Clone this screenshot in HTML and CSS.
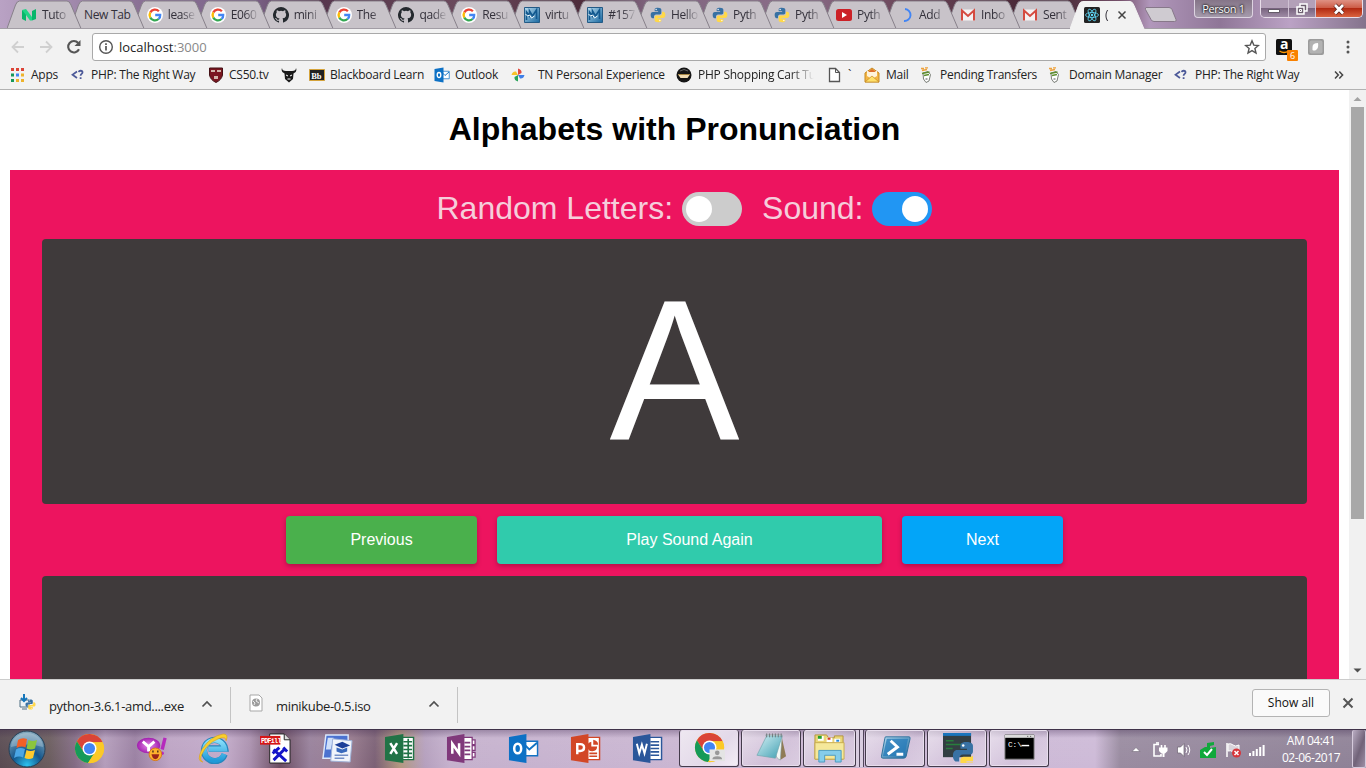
FILE: index.html
```html
<!DOCTYPE html>
<html lang="en">
<head>
<meta charset="utf-8">
<title>Alphabets with Pronunciation</title>
<link rel="stylesheet" href="styles.css">
</head>
<body>
<svg class="defs" width="0" height="0">
  <defs>
    <linearGradient id="gBlue" x1="0" y1="0" x2="1" y2="1"><stop offset="0" stop-color="#b8ddf0"/><stop offset="1" stop-color="#17669f"/></linearGradient>
    <radialGradient id="gOrb" cx=".5" cy=".95" r=".9"><stop offset="0" stop-color="#2cc3f0"/><stop offset=".45" stop-color="#14568c"/><stop offset="1" stop-color="#7fa5bb"/></radialGradient>
    <linearGradient id="gIe" x1="0" y1="0" x2="0" y2="1"><stop offset="0" stop-color="#8be0fb"/><stop offset="1" stop-color="#1f9ad8"/></linearGradient>
    <linearGradient id="gPad" x1="0" y1="0" x2="1" y2="1"><stop offset="0" stop-color="#d4f0f4"/><stop offset="1" stop-color="#3f9fb2"/></linearGradient>
    <radialGradient id="gYahoo"><stop offset="0" stop-color="#e58be8"/><stop offset="1" stop-color="#a21faf"/></radialGradient>
  </defs>
  <symbol id="tabshape" viewBox="0 0 75 28"><path d="M0 28.500L8.500 5Q10 1 12.500 1H60Q62.500 1 64 5L74 28.500Z"/></symbol>
  <symbol id="google" viewBox="0 0 16 16"><circle cx="8" cy="8" r="8" fill="#fff"/><g fill="none" stroke-width="2.300"><path d="M11.900 4.200A5.400 5.400 0 0 0 3.300 5.400" stroke="#ea4335"/><path d="M3.300 5.400A5.400 5.400 0 0 0 3.300 10.600" stroke="#fbbc05"/><path d="M3.300 10.600A5.400 5.400 0 0 0 11.600 12" stroke="#34a853"/><path d="M11.600 12A5 5 0 0 0 13.200 8H8.200" stroke="#4285f4"/></g></symbol>
  <symbol id="github" viewBox="0 0 16 16"><path fill="#24292e" d="M8 0a8 8 0 0 0-2.530 15.590c.4.070.55-.17.55-.38v-1.490C4 14.090 3.480 13.230 3.320 12.780c-.09-.23-.48-.94-.82-1.130-.28-.15-.68-.52-.01-.53.63-.01 1.080.58 1.230.82.72 1.210 1.870.87 2.330.66.070-.52.28-.87.510-1.070-1.780-.2-3.640-.89-3.640-3.950 0-.87.310-1.590.82-2.150-.08-.2-.36-1.020.08-2.120 0 0 .67-.21 2.200.82a7.400 7.400 0 0 1 4 0c1.530-1.040 2.200-.82 2.200-.82.440 1.100.160 1.920.080 2.120.510.560.820 1.270.820 2.150 0 3.070-1.870 3.750-3.650 3.950.290.250.540.730.540 1.480v2.200c0 .210.150.460.550.380A8 8 0 0 0 8 0z"/></symbol>
  <symbol id="python" viewBox="0 0 24 24"><path fill="#3871a3" d="M11.800 1C7 1 7 3.100 7 4v2.500h5.200v1H4.500C2 7.500 1 9.500 1 12s1 4.700 3 4.700h2v-2.600c0-1.500 1.300-3 3-3h5.500c1.400 0 2.500-1.100 2.500-2.500V4c0-1.700-1.600-3-5.200-3z"/><circle cx="9.200" cy="3.800" r="1" fill="#fff"/><path fill="#ffd849" d="M12.200 23c4.800 0 4.800-2.100 4.800-3v-2.500h-5.200v-1h7.700c2.500 0 3.500-2 3.500-4.500s-1-4.700-3-4.700h-2v2.600c0 1.500-1.300 3-3 3H9.500C8.100 12.900 7 14 7 15.400V20c0 1.700 1.600 3 5.200 3z"/><circle cx="14.800" cy="20.200" r="1" fill="#fff"/></symbol>
  <symbol id="vm" viewBox="0 0 16 16"><path fill="url(#gBlue)" stroke="#245b86" d="M.5.5h15v15H.5z"/><path d="M2.500 13V5l3 4V4l3 5 4-6v9" fill="none" stroke="#13598f" stroke-width="1.600"/><path d="M1.500 7l2 2 2-1 2 3 3-2" stroke="#f4fbff" fill="none"/></symbol>
  <symbol id="gmail" viewBox="0 0 16 16"><path fill="#f5f2f2" d="M1 2.500h14v11H1z"/><path fill="none" stroke="#d54b40" stroke-width="2" d="M2 13.500V3.600L8 9l6-5.400v9.900"/></symbol>
  <symbol id="php" viewBox="0 0 16 16"><path d="M7 4.500L2.500 7.800 7 11" fill="none" stroke="#4d5a99" stroke-width="1.700"/><path d="M8.800 5.200c.3-2 3.700-1.900 3.700.2 0 1.500-1.900 1.600-1.900 3.300M10.600 10.200v1.700" fill="none" stroke="#4d5a99" stroke-width="1.800"/></symbol>
  <symbol id="sheetfox" viewBox="0 0 16 16"><path d="M2 1.500h3M6 .8h3M3 3.500l5-1" stroke="#eda13b" stroke-width="1.300" fill="none"/><path d="M4 6l5-1.500 2.500 3L10 14l-3 1.500L4.500 12z" fill="#fff" stroke="#6d726a" stroke-width=".9"/><path d="M3 6.500l7.500-1.500M5 8.500l5-1" stroke="#5f8f30" stroke-width="1.500"/><path d="M6.500 12h2" stroke="#555"/></symbol>
  <symbol id="outlook" viewBox="0 0 32 32"><path fill="#fff" stroke="#1273c4" stroke-width="1.500" d="M16 8.500h14.500v15H16z"/><path d="M17 12l5 5 8-7" fill="none" stroke="#1273c4" stroke-width="2"/><path fill="#0d71c5" d="M1 4l18-3v30L1 28z"/><ellipse cx="10" cy="16" rx="3.600" ry="5" fill="none" stroke="#fff" stroke-width="2.600"/></symbol>
  <symbol id="chrome" viewBox="0 0 32 32"><circle cx="16" cy="16" r="15" fill="#fbc927"/><path d="M3 8.500A15 15 0 0 1 29.500 9.500H16L10 19.500z" fill="#da4437"/><path d="M3 8.500A15 15 0 0 0 14.500 31L21.500 20 10 19.500z" fill="#159a59"/><path d="M29.500 9.500H16v5l5.500 5.500-7 11A15 15 0 0 0 29.500 9.500z" fill="#fbc927"/><circle cx="16" cy="16" r="7.200" fill="#fff"/><circle cx="16" cy="16" r="5.700" fill="#4285f4"/></symbol>
  <symbol id="chev" viewBox="0 0 12 12"><path d="M1.500 8.500L6 4l4.500 4.500" fill="none" stroke="#505050" stroke-width="1.700"/></symbol>
</svg>

<header class="frame">
  <nav class="tabs">
    <div class="tab"><svg class="shape"><use href="#tabshape"/></svg><svg class="fav" viewBox="0 0 16 16"><path d="M1 3l4 2v9l-4-2zM15 2v10l-4 1.500V4z" fill="#08b66b"/><path d="M1 3l4-1 6 8v3.500H9L5 8z" fill="#20d486"/></svg><span class="label">Tuto</span></div>
    <div class="tab plain"><svg class="shape"><use href="#tabshape"/></svg><span class="label">New Tab</span></div>
    <div class="tab"><svg class="shape"><use href="#tabshape"/></svg><svg class="fav"><use href="#google"/></svg><span class="label">lease</span></div>
    <div class="tab"><svg class="shape"><use href="#tabshape"/></svg><svg class="fav"><use href="#google"/></svg><span class="label">E060</span></div>
    <div class="tab"><svg class="shape"><use href="#tabshape"/></svg><svg class="fav"><use href="#github"/></svg><span class="label">mini</span></div>
    <div class="tab"><svg class="shape"><use href="#tabshape"/></svg><svg class="fav"><use href="#google"/></svg><span class="label">The</span></div>
    <div class="tab"><svg class="shape"><use href="#tabshape"/></svg><svg class="fav"><use href="#github"/></svg><span class="label">qade</span></div>
    <div class="tab"><svg class="shape"><use href="#tabshape"/></svg><svg class="fav"><use href="#google"/></svg><span class="label">Resu</span></div>
    <div class="tab"><svg class="shape"><use href="#tabshape"/></svg><svg class="fav"><use href="#vm"/></svg><span class="label">virtu</span></div>
    <div class="tab"><svg class="shape"><use href="#tabshape"/></svg><svg class="fav"><use href="#vm"/></svg><span class="label">#157</span></div>
    <div class="tab"><svg class="shape"><use href="#tabshape"/></svg><svg class="fav"><use href="#python"/></svg><span class="label">Hello</span></div>
    <div class="tab"><svg class="shape"><use href="#tabshape"/></svg><svg class="fav"><use href="#python"/></svg><span class="label">Pyth</span></div>
    <div class="tab"><svg class="shape"><use href="#tabshape"/></svg><svg class="fav"><use href="#python"/></svg><span class="label">Pyth</span></div>
    <div class="tab"><svg class="shape"><use href="#tabshape"/></svg><svg class="fav" viewBox="0 0 16 16"><rect y="2" width="16" height="12" rx="2.500" fill="#cc2127"/><path d="M6 5l5 3-5 3z" fill="#fff"/></svg><span class="label">Pyth</span></div>
    <div class="tab"><svg class="shape"><use href="#tabshape"/></svg><svg class="fav" viewBox="0 0 16 16"><path d="M7 2a6 6 0 1 1-1 12" fill="none" stroke="#4285f4" stroke-width="1.900"/></svg><span class="label">Add</span></div>
    <div class="tab"><svg class="shape"><use href="#tabshape"/></svg><svg class="fav"><use href="#gmail"/></svg><span class="label">Inbo</span></div>
    <div class="tab"><svg class="shape"><use href="#tabshape"/></svg><svg class="fav"><use href="#gmail"/></svg><span class="label">Sent</span></div>
    <div class="tab active"><svg class="shape"><use href="#tabshape"/></svg><svg class="fav" viewBox="0 0 16 16"><rect width="16" height="16" rx="1.500" fill="#222"/><g fill="none" stroke="#61dafb" stroke-width=".8"><ellipse cx="8" cy="8" rx="6.500" ry="2.500"/><ellipse cx="8" cy="8" rx="6.500" ry="2.500" transform="rotate(60 8 8)"/><ellipse cx="8" cy="8" rx="6.500" ry="2.500" transform="rotate(120 8 8)"/></g><circle cx="8" cy="8" r="1.200" fill="#61dafb"/></svg><span class="label">(</span><svg class="close" viewBox="0 0 10 10"><path d="M1.500 1.500l7 7M8.500 1.500l-7 7" stroke="#444" stroke-width="1.500"/></svg></div>
    <svg class="newtab" viewBox="0 0 34 18"><path d="M2 1.500h23q2 0 3 2l4 10q1 2-1.500 2H10q-2 0-3-2L1.500 3.500Q1 1.500 2 1.500z" fill="#cfcbd1" stroke="#87788a"/></svg>
  </nav>
  <div class="winctl">
    <div class="person">Person 1</div>
    <div class="buttons">
      <span class="min"><svg viewBox="0 0 14 14" width="14" height="14"><path d="M1.500 7.500h11v3h-11z" fill="#fff" stroke="#4c4350" stroke-width=".8"/></svg></span>
      <span class="max"><svg viewBox="0 0 14 14" width="14" height="14"><g fill="#6d5f70" stroke="#fff" stroke-width="1.500"><path d="M5 2h7v7H5z"/><path d="M2 5h7v7H2z"/><path d="M4.500 7.500h2v2h-2z" stroke-width="1"/></g></svg></span>
      <span class="x"><svg viewBox="0 0 14 14" width="14" height="14"><path d="M3 3l8 8.500M11 3l-8 8.500" stroke="#58211c" stroke-width="4.200"/><path d="M3 3l8 8.500M11 3l-8 8.500" stroke="#fff" stroke-width="2.700"/></svg></span>
    </div>
  </div>
</header>

<div class="toolbar">
  <svg class="nav" viewBox="0 0 16 16"><path d="M14 8H3M8 2.500L2.500 8 8 13.500" fill="none" stroke="#d0d0d0" stroke-width="1.800"/></svg>
  <svg class="nav" viewBox="0 0 16 16"><path d="M2 8h11M8 2.500L13.500 8 8 13.500" fill="none" stroke="#d0d0d0" stroke-width="1.800"/></svg>
  <svg class="nav" viewBox="0 0 16 16"><path d="M13 10.200A5.700 5.700 0 1 1 12.200 4" fill="none" stroke="#555" stroke-width="2.100"/><path d="M14.500 1v6h-6z" fill="#555"/></svg>
  <div class="omnibox">
    <svg viewBox="0 0 16 16" width="16" height="16"><circle cx="8" cy="8" r="6.300" fill="none" stroke="#555" stroke-width="1.400"/><path d="M8 7v4.500M8 4.300v1.600" stroke="#555" stroke-width="1.700"/></svg>
    <span class="url">localhost<i>:3000</i></span>
    <svg class="star" viewBox="0 0 16 16" width="16" height="16"><path d="M8 1.800l1.800 4.300 4.600.4-3.500 3 1.100 4.500L8 11.600 4 14l1.100-4.500-3.500-3 4.600-.4z" fill="none" stroke="#555" stroke-width="1.400"/></svg>
  </div>
  <div class="ext amazon"><svg viewBox="0 0 16 16" width="16" height="16"><rect width="16" height="16" rx="1.500" fill="#111"/><path d="M3.500 12q4.500 3 9 0" fill="none" stroke="#f90" stroke-width="1.300"/></svg><b>a</b><em>6</em></div>
  <svg class="ext" viewBox="0 0 16 16"><rect width="16" height="16" rx="2" fill="#9b9b9b"/><rect x="1.500" y="1.500" width="13" height="13" rx="2" fill="#b2b2b2"/><path d="M4.500 11V8q0-4 5.500-4 1 5-2 7-2 1-3.500 0z" fill="#fff"/></svg>
  <svg class="dots" viewBox="0 0 4 16"><circle cx="2" cy="3" r="1.500" fill="#555"/><circle cx="2" cy="8" r="1.500" fill="#555"/><circle cx="2" cy="13" r="1.500" fill="#555"/></svg>
</div>

<div class="bookmarks">
  <div class="bm" style="width:61px"><svg viewBox="0 0 16 16"><path d="M2 1h3v3H2zM7 1h3v3H7zM12 1h3v3h-3z" fill="#dc4437"/><path d="M2 6.500h3v3H2z" fill="#16985a"/><path d="M7 6.500h3v3H7z" fill="#4285f4"/><path d="M12 6.500h3v3h-3zM12 12h3v3h-3zM7 12h3v3H7z" fill="#eeb32b"/><path d="M2 12h3v3H2z" fill="#16985a"/></svg><span>Apps</span></div>
  <div class="bm tight" style="width:138px"><svg><use href="#php"/></svg><span>PHP: The Right Way</span></div>
  <div class="bm tight" style="width:73px"><svg viewBox="0 0 16 16"><path d="M1.500 1h13v7q-1 5-6.500 7.500Q2.500 13 1.500 8z" fill="#7a1620" stroke="#431015"/><path d="M3 3h4v2H3zM9 3h4v2H9zM6 9h4v3H6z" fill="#d1b5aa"/></svg><span>CS50.tv</span></div>
  <div class="bm" style="width:28px"><svg viewBox="0 0 16 16"><path d="M1 1q0 3 4 3h6q4 0 4-3 1.500 4-2.500 5.500L12 12l-4 3.500L4 12l-.5-5.500Q-.5 5 1 1z" fill="#191919"/><path d="M5 8l2 1M11 8L9 9M6.500 12h3" stroke="#fff"/></svg></div>
  <div class="bm tight" style="width:125px"><svg viewBox="0 0 16 16"><path fill="#222" stroke="#d5a33a" d="M.5 2.500h15v11H.5z"/><text x="2.300" y="11.500" class="bb">Bb</text></svg><span>Blackboard Learn</span></div>
  <div class="bm tight" style="width:76px"><svg><use href="#outlook"/></svg><span>Outlook</span></div>
  <div class="bm" style="width:27px"><svg viewBox="0 0 16 16"><path d="M8 8V1.500q4 1 3.500 4.500z" fill="#e14a3e"/><path d="M8 8h6.500q-1 4-4.500 3.500z" fill="#3f7fe8"/><path d="M8 8v6.500q-4-1-3.500-4.500z" fill="#28a45a"/><path d="M8 8H1.500q1-4 4.500-3.500z" fill="#f8c229"/></svg></div>
  <div class="bm" style="width:139px"><span class="first">TN Personal Experience</span></div>
  <div class="bm cart" style="width:150px"><svg viewBox="0 0 16 16"><circle cx="8" cy="8" r="7.500" fill="#161616"/><path d="M2 7.500h12L11.500 11h-7z" fill="#f2ddb2"/><path d="M2 7.500h12" stroke="#a98947"/><path d="M4 4q4-3 8 0" fill="none" stroke="#666"/></svg><span>PHP Shopping Cart Tu</span></div>
  <div class="bm" style="width:38px"><svg viewBox="0 0 16 16"><path d="M3.500 1.500h6l4 4v9h-10z" fill="#fff" stroke="#555" stroke-width="1.300"/><path d="M9.500 1.500v4h4" fill="none" stroke="#555"/></svg><span>`</span></div>
  <div class="bm" style="width:55px"><svg viewBox="0 0 16 16"><path d="M1 6l7-5 7 5v9H1z" fill="#f4b544" stroke="#c58b24"/><path d="M3 4h10v5l-5 3-5-3z" fill="#fff3da"/><path d="M4 5l4-3 4 3z" fill="#de6d2c"/><path d="M1 15l7-6 7 6z" fill="#ffe06a" stroke="#c58b24" stroke-width=".7"/></svg><span>Mail</span></div>
  <div class="bm tight" style="width:128px"><svg><use href="#sheetfox"/></svg><span>Pending Transfers</span></div>
  <div class="bm" style="width:126px"><svg><use href="#sheetfox"/></svg><span>Domain Manager</span></div>
  <div class="bm" style="width:157px"><svg><use href="#php"/></svg><span>PHP: The Right Way</span></div>
  <svg class="more" viewBox="0 0 10 10"><path d="M1 1.500L4.300 5 1 8.500M5.300 1.500L8.600 5 5.300 8.500" fill="none" stroke="#444" stroke-width="1.500"/></svg>
</div>

<div class="viewport">
  <main class="page">
    <h1>Alphabets with Pronunciation</h1>
    <section class="app">
      <div class="options"><span>Random Letters:</span><i class="switch"></i><span class="snd">Sound:</span><i class="switch on"></i></div>
      <div class="card"><span class="letter">A</span></div>
      <div class="actions"><button class="btn prev">Previous</button><button class="btn play">Play Sound Again</button><button class="btn next">Next</button></div>
      <div class="card"></div>
    </section>
  </main>
  <aside class="scroll"><svg viewBox="0 0 17 17"><path d="M4.500 11L8.500 7l4 4z" fill="#a3a3a3"/></svg><div class="thumb"></div><svg class="down" viewBox="0 0 17 17"><path d="M4.500 6.500l4 4 4-4z" fill="#505050"/></svg></aside>
</div>

<div class="shelf">
  <div class="dl"><svg class="file" viewBox="0 0 18 18"><path d="M2 6h9v7H2z" fill="#edf3f6" stroke="#4e6f83"/><path d="M4 15h5" stroke="#4e6f83"/><path d="M6 0v6M3 4l3 3 3-3" fill="none" stroke="#1677bb" stroke-width="2"/><svg x="7" y="5" width="11" height="11"><use href="#python"/></svg></svg><span>python-3.6.1-amd....exe</span><svg class="chev"><use href="#chev"/></svg></div>
  <div class="dl two"><svg class="file" viewBox="0 0 18 18"><path d="M3 1h9l3 3v13H3z" fill="#fff" stroke="#a7a7a7"/><circle cx="9" cy="8.500" r="4" fill="#9c9c9c"/><path d="M6 7l2 2-1 2M10 5l-1 2 3 2" stroke="#eee" fill="none"/></svg><span>minikube-0.5.iso</span><svg class="chev"><use href="#chev"/></svg></div>
  <div class="showall">Show all</div>
  <svg class="shut" viewBox="0 0 12 12"><path d="M1.500 1.500l9 9M10.500 1.500l-9 9" stroke="#555" stroke-width="2"/></svg>
</div>

<footer class="taskbar">
  <div class="start"><svg viewBox="0 0 38 38"><circle cx="19" cy="19" r="18" fill="url(#gOrb)" stroke="#263f56"/><path d="M3 17a16 14 0 0 1 32 0q-15-5-32 0z" fill="#fff" opacity=".25"/><path d="M10 10q4-3 9-1l-1.500 8.500q-4-2-9 .5z" fill="#f25f26"/><path d="M20.500 10q4 2 8.500 0l-2 8.500q-4 2-8.500 0z" fill="#8bc53e"/><path d="M8 19.500q4-2.500 9-.5l-2 8.500q-4-2-9 .5z" fill="#4ba6e5"/><path d="M18.500 20q4 2 8.500 0L25 28q-4 2-8.500 0z" fill="#fdca2d"/></svg></div>
  <div class="task"><svg><use href="#chrome"/></svg></div>
  <div class="task"><svg viewBox="0 0 32 32"><ellipse cx="13" cy="13" rx="12" ry="8" fill="url(#gYahoo)"/><path d="M7 9l6 5 6-5M13 14v5" stroke="#fff" stroke-width="3" fill="none"/><path d="M30 5l-3 12" stroke="#b52abc" stroke-width="3.500"/><circle cx="27" cy="21" r="1.800" fill="#b52abc"/><circle cx="20" cy="22" r="6.500" fill="#fdb22d" stroke="#d7791a"/><path d="M16 22h8q-1 5-4 5t-4-5z" fill="#9b251a"/><path d="M17.500 18v2M22.500 18v2" stroke="#51301a" stroke-width="1.500"/></svg></div>
  <div class="task"><svg viewBox="0 0 32 32"><path d="M27.500 22A11 11 0 1 1 28 16H11" fill="none" stroke="#2687bd" stroke-width="6.500"/><path d="M27 21.500A10.500 10.500 0 1 1 27.500 16.500H11" fill="none" stroke="url(#gIe)" stroke-width="5"/><path d="M5 30Q-2 29 4 17 13 3 26 1q6 0 3 7 0-5-8-2Q9 11 4 22q-3 6 1 8z" fill="#f8cf2d" stroke="#d89c13" stroke-width=".6"/></svg></div>
  <div class="task"><svg viewBox="0 0 32 32"><path d="M10 1h15l6 6v24H10z" fill="#fff" stroke="#222"/><path d="M25 1v6h6" fill="#ddd" stroke="#222"/><path d="M0 3h21v9H0z" fill="#d61616"/><text x="1" y="10.300" class="pdf">PDFill</text><path d="M14 28l12-12M14 17l13 12M13 21l7-6M24 15l4 4" stroke="#1414c8" stroke-width="3" fill="none"/></svg></div>
  <div class="task"><svg viewBox="0 0 32 32"><path d="M4 2h23v24H1z" fill="#4b72d0" stroke="#dce8fb" stroke-width="1.500"/><path d="M6 5h6L9 17H4z" fill="#cfe0fa"/><path d="M11 6l20 2-2 22-20-1z" fill="#f0f4fb" stroke="#9fb3d9"/><path d="M13 12l8-3 8 4-8 3z" fill="#1d3f99"/><path d="M15 15l6 2 5-2v4l-6 2-5-2z" fill="#3969bc"/><path d="M13 23h14M13 26h10" stroke="#748fc7" stroke-width="1.500"/></svg></div>
  <div class="task"><svg viewBox="0 0 32 32"><path d="M18 4.500h12.500v23H18z" fill="#fff" stroke="#217346" stroke-width="1.500"/><path d="M20 9h9M20 13h9M20 17h9M20 21h9M20 25h9M25 6v20" stroke="#217346" stroke-width="1.700"/><path d="M1 4l19-3v30L1 28z" fill="#217346"/><path d="M6.500 10.500l7 11M13.500 10.500l-7 11" stroke="#fff" stroke-width="2.600"/></svg></div>
  <div class="task"><svg viewBox="0 0 32 32"><path d="M18 4.500h9v23h-9zM27 7h3v5h-3zM27 13h3v5h-3zM27 20h3v5h-3z" fill="#fff" stroke="#80397b" stroke-width="1.300"/><path d="M19 10h6M19 14h6M19 18h6M19 22h6" stroke="#80397b" stroke-width="1.700"/><path d="M1 4l18-3v30L1 28z" fill="#80397b"/><path d="M6.500 21.500V11l7 10V10.500" stroke="#fff" stroke-width="2.600" fill="none"/></svg></div>
  <div class="task"><svg><use href="#outlook"/></svg></div>
  <div class="task"><svg viewBox="0 0 32 32"><path d="M18 4.500h12.500v23H18z" fill="#fff" stroke="#d24726" stroke-width="1.500"/><path d="M22 9a5 5 0 1 0 6 5h-6zM24 7v5h5q0-4-5-5z" fill="#d24726"/><path d="M20 21h8M20 24h8" stroke="#d24726" stroke-width="1.700"/><path d="M1 4l18-3v30L1 28z" fill="#d24726"/><path d="M7.500 22V11.500h3q4 0 4 3.500t-4 3.500h-3" stroke="#fff" stroke-width="2.500" fill="none"/></svg></div>
  <div class="task"><svg viewBox="0 0 32 32"><path d="M18 4.500h12.500v23H18z" fill="#fff" stroke="#2b579a" stroke-width="1.500"/><path d="M19 9h9M19 12.500h9M19 16h9M19 19.500h9M19 23h9" stroke="#2b579a" stroke-width="1.700"/><path d="M1 4l18-3v30L1 28z" fill="#2b579a"/><path d="M5 11l2.500 10 2.700-9 2.700 9 2.500-10" stroke="#fff" stroke-width="2" fill="none"/></svg></div>
  <div class="task open bright"><svg viewBox="0 0 32 32"><use href="#chrome"/><path d="M16 18h16v12H16z" fill="#e4e4e4"/><circle cx="24" cy="21.500" r="2.400" fill="#999"/><path d="M19 28q0-3 5-3t5 3z" fill="#999"/></svg></div>
  <div class="task open"><svg viewBox="0 0 32 32"><path d="M26 3l5 22-6 4z" fill="#8f7b55"/><path d="M10 3h17l-2 26-3-2z" fill="#f3f8f5" stroke="#849a9b" stroke-width=".6"/><path d="M11 4h16l-7 23L1 24z" fill="url(#gPad)" stroke="#6fa6ae" stroke-width=".7"/><path d="M11 1.500v4M14 1.500v4M17 1.500v4M20 1.500v4M23 1.500v4M26 1.500v4" stroke="#727a7d"/></svg></div>
  <div class="task open stack"><svg viewBox="0 0 32 32"><path d="M1 6V3h12l2 3h6V4h9v24H1z" fill="#ead676" stroke="#b5963d"/><path d="M4 4h6v5H4zM13 6h6v5h-6zM21 7h6v5h-6z" fill="#fff"/><path d="M4 4h4v3H4z" fill="#24a12e"/><path d="M14 6h3v2h-3z" fill="#d93c26"/><path d="M23 8h3v2h-3z" fill="#2b8ad8"/><path d="M1 11h30v17H1z" fill="#f5e89a" stroke="#c8ac51"/><path d="M5 31V19h23v12h-6v-7H11v7z" fill="#85cdea" stroke="#4b9bc0"/></svg><i></i><i></i></div>
  <div class="task open"><svg viewBox="0 0 32 32"><path d="M6 5h24q1.500 0 1 2l-4 18q-.5 2-2.500 2H3q-2 0-1.500-2L5 6.500Q5 5 6 5z" fill="url(#gBlue)" stroke="#2d719c"/><path d="M7 7h22l-4 18H3z" fill="#2479b8" opacity=".75"/><path d="M11 9l7 6.500L8 23M17 23h7" fill="none" stroke="#fff" stroke-width="3"/></svg></div>
  <div class="task open"><svg viewBox="0 0 32 32"><path d="M1 1h29v25H1z" fill="#333f43"/><path d="M1 1h29v3H1z" fill="#1975bd"/><path d="M4 9h8M4 13h16M4 17h7" stroke="#287d3d" stroke-width="1.500"/><svg x="10" y="9" width="22" height="22"><use href="#python"/></svg></svg></div>
  <div class="task open"><svg viewBox="0 0 32 32"><path d="M1 3h30v25H1z" fill="#000" stroke="#777"/><path d="M1 3h30v3H1z" fill="#dcdcdc"/><path d="M24 4.500h1M27 4.500h1" stroke="#444"/><text x="4" y="15.500" class="cmd">C:\</text><path d="M18 14h8" stroke="#fff" stroke-width="1.500"/></svg></div>
  <div class="tray">
    <svg viewBox="0 0 16 16"><path d="M4 9.500l4-4 4 4z" fill="#fff" stroke="#635869" stroke-width=".5"/></svg>
    <svg viewBox="0 0 16 16"><g fill="none" stroke="#fff" stroke-width="1.600"><path d="M7 2.500H2v11.500h7v-2"/><path d="M4 1h3"/><path d="M9.500 3v3M13 3v3"/></g><path d="M7 5.500h8.500V9l-2.500 2.500H9.500L7 9zM10.500 11h2v4h-2z" fill="#fff"/></svg>
    <svg viewBox="0 0 16 16"><path d="M1.500 5h3L8 1.500v13L4.500 11h-3z" fill="#fff" stroke="#6b6170" stroke-width=".7"/><path d="M10 5q2 3 0 6M12 3q3.500 5 0 10" fill="none" stroke="#fff"/></svg>
    <svg viewBox="0 0 16 16"><path d="M0 8l5-3h2V1l7-1v3l-4 1v2l6-1v11H0z" fill="#10a83b"/><path d="M4 10l3 3 5-6" fill="none" stroke="#fff" stroke-width="2"/></svg>
    <svg viewBox="0 0 16 16"><path d="M2 1v14" stroke="#fff" stroke-width="1.500"/><path d="M3 2q3-1 5 1t6 0v7q-4 2-6 0t-5-1z" fill="#d8d3da" stroke="#fff"/><circle cx="11.500" cy="11" r="4.500" fill="#d7353b"/><path d="M9.500 9l4 4M13.500 9l-4 4" stroke="#fff" stroke-width="1.500"/></svg>
    <svg viewBox="0 0 16 16"><path d="M0 11h2v3H0zM3.400 9h2v5h-2zM6.800 7h2v7h-2zM10.200 5h2v9h-2zM13.600 3h2v11h-2z" fill="#fff"/></svg>
  </div>
  <div class="clock"><span>AM 04:41</span><span>02-06-2017</span></div>
  <div class="desk"></div>
</footer>
</body>
</html>
```
FILE: styles.css
```css
* { box-sizing: border-box; }
body {
  margin: 0; width: 1366px; height: 768px; overflow: hidden;
  display: flex; flex-direction: column;
  font-family: "Open Sans", "Noto Sans", sans-serif; font-size: 12px; color: #222; background: #fff;
}
svg { flex: none; display: block; }
.defs { position: absolute; }

/* window frame and tabs */
.frame {
  height: 29px; flex: none; display: flex; justify-content: space-between; border-bottom: 1px solid #a29da5;
  background: linear-gradient(90deg, #b9a2c4 0, #8a7195 140px, #7c6389 250px, #56374e 320px, #5c3c50 380px, #6b4a5d 460px, #4e2c3b 580px, #806580 650px, #8a6d88 800px, #6c475b 900px, #4a2938 1020px, #51313f 1070px, #75506b 1120px, #b197bb 1150px, #8f7697 1220px, #bba2c5 1290px, #84738c 1366px);
}
.tabs { display: flex; padding-left: 7px; height: 28px; isolation: isolate; }
.tab { position: relative; z-index: 1; width: 75px; margin-right: -12.1px; height: 28px; display: flex; align-items: center; padding: 2px 0 0 14px; flex: none; }
.tab:nth-child(n+11) { margin-right: -13px; }
/* earlier tabs lie over later ones */
.tab:nth-child(1) { z-index: 17; }
.tab:nth-child(2) { z-index: 16; }
.tab:nth-child(3) { z-index: 15; }
.tab:nth-child(4) { z-index: 14; }
.tab:nth-child(5) { z-index: 13; }
.tab:nth-child(6) { z-index: 12; }
.tab:nth-child(7) { z-index: 11; }
.tab:nth-child(8) { z-index: 10; }
.tab:nth-child(9) { z-index: 9; }
.tab:nth-child(10) { z-index: 8; }
.tab:nth-child(11) { z-index: 7; }
.tab:nth-child(12) { z-index: 6; }
.tab:nth-child(13) { z-index: 5; }
.tab:nth-child(14) { z-index: 4; }
.tab:nth-child(15) { z-index: 3; }
.tab:nth-child(16) { z-index: 2; }
.tab:nth-child(17) { z-index: 1; }
.tab.active { z-index: 20; }
.shape { position: absolute; z-index: -1; left: 0; top: 0; width: 75px; height: 28px; fill: #c8c3c9; stroke: #87808a; stroke-width: 1; overflow: visible; }
.active .shape { fill: #f2f2f2; stroke: #f2f2f2; height: 29px; }
.fav { width: 16px; height: 16px; margin-right: 5px; }
.label { width: 27px; overflow: hidden; white-space: nowrap; font-size: 12px; letter-spacing: -.4px; color: #33303a; line-height: 18px; -webkit-mask-image: linear-gradient(90deg, #000 50%, rgba(0,0,0,.1)); mask-image: linear-gradient(90deg, #000 50%, rgba(0,0,0,.1)); }
.plain .label { width: 49px; letter-spacing: -.3px; -webkit-mask-image: none; mask-image: none; }
.active .label { width: 6px; }
.close { width: 10px; height: 10px; margin-left: 6px; }
.newtab { width: 34px; height: 18px; margin: 6px 0 0 12px; }
.winctl { display: flex; gap: 7px; padding-right: 3px; }
.person { width: 59px; height: 18px; border: 1px solid #ddd3e1; border-top: 0; border-radius: 0 0 4px 4px; background: linear-gradient(#857588, #a59aab); color: #fff; font-size: 11px; line-height: 17px; text-align: center; letter-spacing: -.3px; text-shadow: 0 0 3px #000, 0 0 2px #000; }
.buttons { display: flex; width: 103px; height: 18px; border: 1px solid #e8dde9; border-top: 0; border-radius: 0 0 5px 5px; overflow: hidden; }
.buttons span { display: flex; align-items: center; justify-content: center; width: 28px; background: linear-gradient(#b3a0b8 45%, #796480 50%, #9f8ba5); border-right: 1px solid #cfc1d3; }
.buttons .x { width: 46px; border: 0; background: linear-gradient(#df9183 0, #cd5d47 45%, #b22a12 50%, #da633f); }

/* toolbar */
.toolbar { height: 36px; flex: none; display: flex; align-items: center; background: #f2f2f2; padding-left: 10px; }
.nav { width: 16px; height: 16px; margin-right: 12px; }
.omnibox { width: 1174px; height: 28px; margin-left: -2px; display: flex; align-items: center; background: #fff; border: 1px solid #a9a9a9; border-radius: 3px; padding: 0 5px; }
.url { flex: 1; margin-left: 5px; font-size: 13px; color: #222; }
.url i { color: #888; font-style: normal; }
.ext { width: 16px; height: 16px; margin-left: 10px; position: relative; }
.ext + .ext { margin-left: 16px; }
.amazon b { position: absolute; left: 4px; top: -4px; color: #fff; font-size: 14px; line-height: 18px; }
.amazon em { position: absolute; left: 11px; top: 11px; width: 11px; height: 11px; background: #f98100; color: #fff; font: 9px/11px "Open Sans", sans-serif; text-align: center; border-radius: 1px; }
.dots { width: 4px; height: 16px; margin-left: 22px; }

/* bookmarks */
.bookmarks { height: 25px; flex: none; display: flex; align-items: center; background: #f2f2f2; border-bottom: 1px solid #b2b2b2; padding: 0 0 5px 9px; }
.bm { display: flex; align-items: center; gap: 6px; flex: none; white-space: nowrap; font-size: 12px; letter-spacing: -.25px; line-height: 18px; }
.bm.tight { gap: 5px; }
.bm svg { width: 16px; height: 16px; }
.bm .first { padding-left: 1px; }
.cart span { width: 116px; overflow: hidden; -webkit-mask-image: linear-gradient(90deg, #000 80%, transparent); mask-image: linear-gradient(90deg, #000 80%, transparent); }
.bb { font: bold 8.500px "Liberation Serif", serif; fill: #fff; }
.more { width: 10px; height: 10px; margin-left: 4px; }

/* page */
.viewport { height: 589px; flex: none; display: flex; overflow: hidden; font-family: "Liberation Sans", Arial, sans-serif; }
.page { width: 1349px; padding: 0 10px; overflow: hidden; }
h1 { margin: 0; padding-top: 21px; height: 80px; font-size: 32px; line-height: 37px; text-align: center; color: #000; }
.app { background: #ed145f; height: 700px; padding: 22px 32px 0; }
.options { display: flex; justify-content: center; align-items: center; height: 34px; margin-bottom: 13px; padding-left: 20px; font-size: 32px; color: #f5cedb; white-space: nowrap; }
.options > span { line-height: 34px; padding-bottom: 2px; }
.snd { margin-left: 20px; }
.switch { width: 60px; height: 34px; margin-left: 9px; border-radius: 17px; background: #ccc; padding: 4px; display: flex; }
.switch::before { content: ""; width: 26px; height: 26px; border-radius: 50%; background: #fff; }
.on { background: #2196f3; justify-content: flex-end; }
.card { height: 265px; border-radius: 4px; background: #3f3a3b; color: #fff; font-size: 195px; line-height: 265px; text-align: center; }
.letter { display: inline-block; transform: scaleY(1.03); transform-origin: 50% 199px; }
.actions { display: flex; justify-content: center; gap: 20px; padding: 12px 0; }
.btn { height: 48px; padding: 0; border: 0; border-radius: 4px; color: #fff; font: 16px "Liberation Sans", Arial, sans-serif; box-shadow: 0 2px 5px rgba(0,0,0,.26); }
.prev { width: 191px; background: #4ab04c; }
.play { width: 385px; background: #30cbac; }
.next { width: 161px; background: #03a5f8; }
.scroll { width: 17px; background: #f1f1f1; display: flex; flex-direction: column; align-items: center; }
.scroll svg { width: 17px; height: 17px; }
.thumb { width: 13px; height: 412px; background: #a8a8a8; }
.scroll .down { margin-top: auto; }

/* download shelf */
.shelf { height: 50px; flex: none; display: flex; align-items: center; background: #f2f2f2; border-top: 1px solid #ccc; font-size: 13px; }
.dl { width: 231px; height: 36px; display: flex; align-items: center; padding: 2px 17px 0 18px; border-right: 1px solid #c4c4c4; letter-spacing: -.33px; }
.dl.two { width: 227px; padding-left: 16px; }
.dl .file { width: 18px; height: 18px; margin: -6px 13px 0 0; }
.dl.two .file { margin-right: 11px; }
.chev { width: 12px; height: 12px; margin: -4px 0 0 auto; }
.showall { margin-left: auto; width: 78px; height: 28px; margin-top: -3px; border: 1px solid #b4b4b4; border-radius: 3px; background: #fafafa; text-align: center; line-height: 26px; font-size: 12px; color: #111; }
.shut { width: 12px; height: 12px; margin: -3px 12px 0; }

/* taskbar */
.taskbar {
  height: 39px; flex: none; display: flex; border-top: 1px solid #40334a;
  background: linear-gradient(rgba(80,60,95,.35), rgba(255,255,255,.06) 8px, transparent), linear-gradient(90deg, #584a51 0, #6a5c5e 50px, #836b84 75px, #b49dbb 105px, #9a80a2 135px, #bda4c4 170px, #c2aac9 225px, #aa90ae 250px, #6b4d61 280px, #97809b 310px, #9b7e91 345px, #7b6075 375px, #b39880 400px, #b5a0be 425px, #c5b1cd 450px, #cab6d2 680px, #cdbad7 1095px, #998ba0 1120px, #8e8196 1366px);
}
.start { width: 58px; padding-left: 8px; }
.start svg { width: 38px; height: 38px; }
.task { width: 62px; flex: none; display: flex; align-items: center; justify-content: center; }
.task svg { width: 31px; height: 31px; margin-top: -1px; }
.open { width: 60px; margin: 0 1px 1px; border: 1px solid #443b4b; border-top: 0; border-radius: 3px; background: linear-gradient(135deg, rgba(255,255,255,.5), rgba(255,255,255,.12) 60%, rgba(255,255,255,.3)); box-shadow: inset 0 0 0 1px #e8deed; }
.bright { background: linear-gradient(135deg, #eee8f1, #e3d9e9 60%, #f4eef6); }
.stack { position: relative; width: 53px; margin-right: 8px; }
.stack i { position: absolute; right: -5px; top: 0; width: 4px; height: 37px; border-right: 1px solid #51455a; background: #d9cde0; }
.stack i + i { right: -9px; }
.task .pdf { font: bold 7px "Liberation Mono", monospace; fill: #fff; letter-spacing: -.8px; }
.task .cmd { font: 8px "Liberation Mono", monospace; fill: #fff; }
.tray { margin-left: auto; display: flex; align-items: center; gap: 8.300px; }
.tray svg { width: 16px; height: 16px; margin-top: 1px; }
.clock { width: 82px; margin-left: 5px; display: flex; flex-direction: column; align-items: center; padding-top: 3px; line-height: 16.500px; color: #fff; font-size: 12px; letter-spacing: -.45px; }
.desk { width: 14px; border: 1px solid #d5cadc; border-width: 0 1px 1px; border-radius: 2px; background: linear-gradient(110deg, #b9acc2, #716379 55%, #9e90a6); }
```
